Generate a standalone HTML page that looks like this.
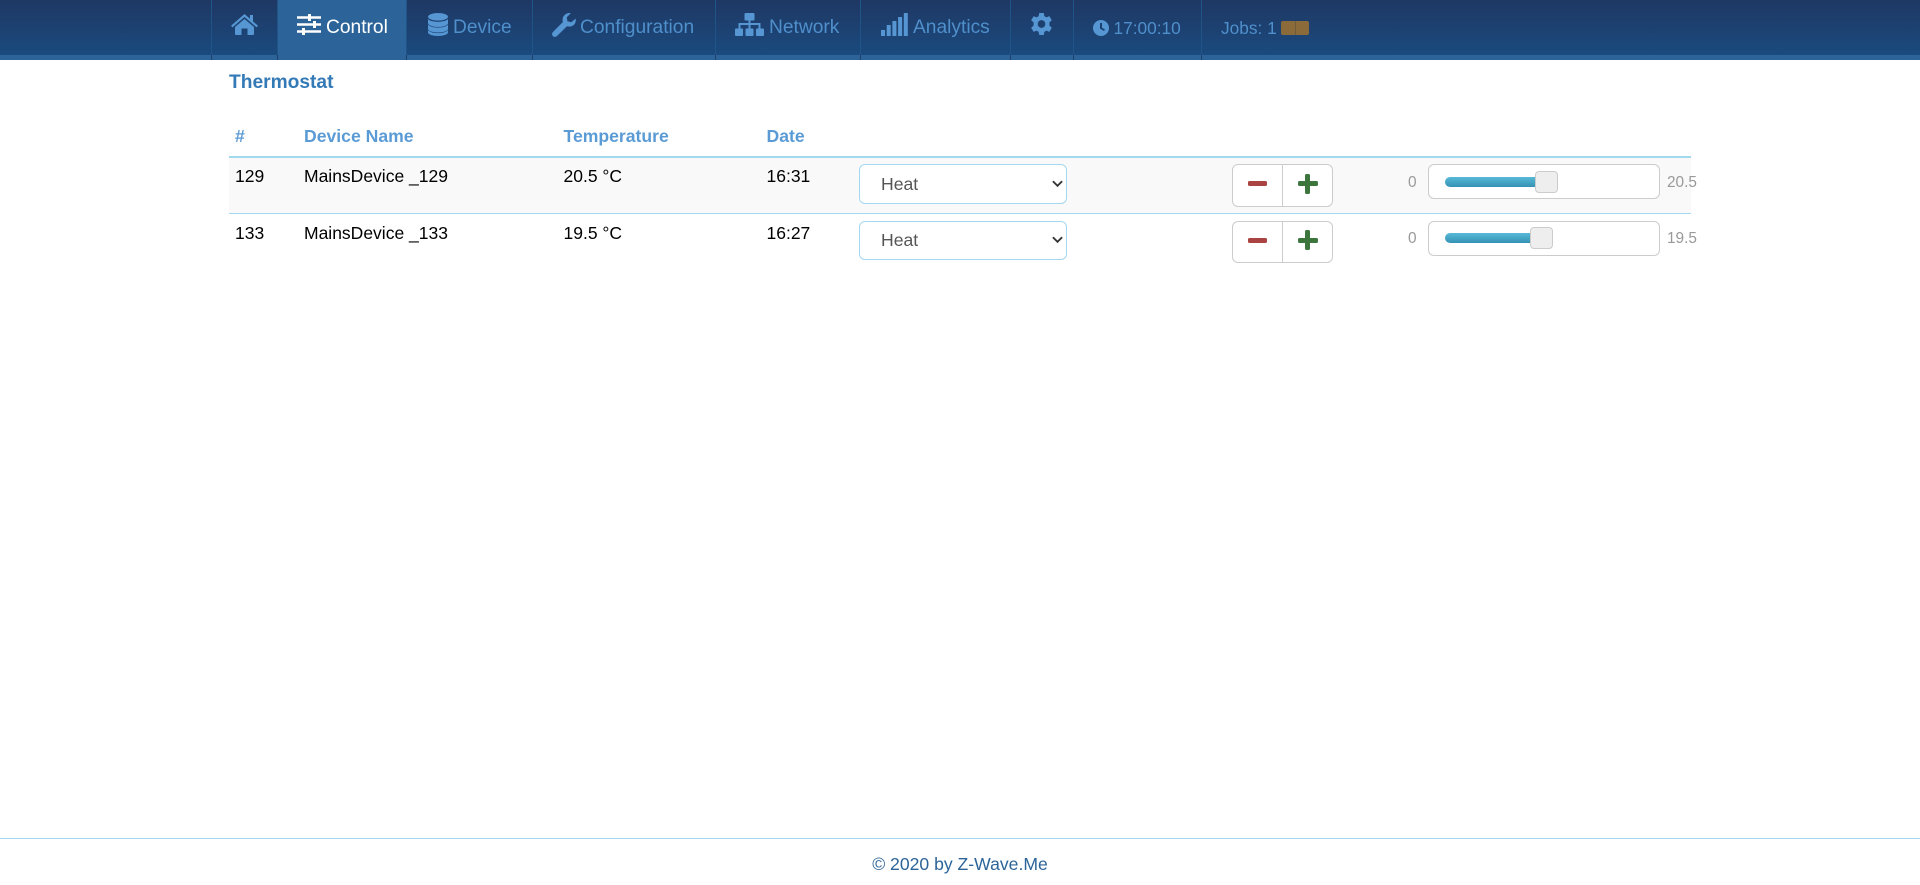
<!DOCTYPE html>
<html><head><meta charset="utf-8"><title>Thermostat</title>
<style>
html,body{margin:0;padding:0;background:#fff;width:1920px;height:885px;overflow:hidden;font-family:"Liberation Sans",sans-serif}
.a{position:absolute}
.t{position:absolute;white-space:nowrap}
#nav{position:absolute;left:0;top:0;width:1920px;height:60px;background:linear-gradient(#1f3864,#1a4a7e 55px);overflow:hidden}
#strip{position:absolute;left:0;top:55px;width:1920px;height:5px;background:#2c6499}
.sep{position:absolute;top:0;width:1px;height:55px;background:#1f5488}
.sep:after{content:"";position:absolute;left:0;top:55px;width:1px;height:5px;background:#1f3f6c}
.n{font-size:19.2px;line-height:24px;top:16px;color:#4f8fcb}
.n2{font-size:17.3px;line-height:22px;top:17px;color:#4f8fcb}
svg{position:absolute;fill:#5596d3}
.h{font-size:17.6px;font-weight:bold;color:#5b9bd5;line-height:20px;top:126px}
.c{font-size:17.5px;color:#000;line-height:20px}
.sel{position:absolute;left:859px;width:208px;box-sizing:border-box;border:1px solid #a3d9ef;border-radius:6px;background:#fff;font-size:17.6px;color:#555;}
.sel span{position:absolute;left:21px;line-height:20px}
.btn{position:absolute;left:1232px;width:101px;box-sizing:border-box;border:1px solid #ccc;border-radius:6px;background:#fff}
.btn i{position:absolute;left:49px;top:0;bottom:0;width:1px;background:#ccc}
.box{position:absolute;left:1428px;width:232px;height:35px;box-sizing:border-box;border:1px solid #ccc;border-radius:6px;background:#fff}
.bar{position:absolute;left:1445px;height:10px;border-radius:5px 0 0 5px;background:linear-gradient(#57b9d8,#3592b4)}
.hd{position:absolute;width:23px;height:22px;box-sizing:border-box;border:1px solid #ccc;border-radius:4px;background:#eee}
.v{font-size:15.4px;color:#999;line-height:20px}
.m{position:absolute;width:19px;height:5px;background:#a94442;border-radius:1.5px}
.p{position:absolute;width:20px;height:5px;background:#3c763d;border-radius:1.5px}
.q{position:absolute;width:5.5px;height:20px;background:#3c763d;border-radius:1.5px}
</style></head><body>
<div id="nav">
<div id="strip"></div>
<div class="a" style="left:277px;top:0;width:130px;height:60px;background:#2c6499"></div>
<div class="sep" style="left:211px"></div><div class="sep" style="left:277px"></div><div class="sep" style="left:406px"></div><div class="sep" style="left:532px"></div><div class="sep" style="left:715px"></div><div class="sep" style="left:860px"></div><div class="sep" style="left:1010px"></div><div class="sep" style="left:1073px"></div><div class="sep" style="left:1201px"></div>

<svg style="left:231px;top:14px" width="27" height="21" viewBox="0 0 27 21"><path d="M13.5 0 L19 4.8 V1 H22 V7.4 L27 11.8 L25.6 13.4 L13.5 3 L1.4 13.4 L0 11.8 Z M13.5 5 L23 13 V20 Q23 21 22 21 H16.5 V14.5 H10.5 V21 H5 Q4 21 4 20 V13 Z"/></svg>

<svg style="left:297px;top:14px;fill:#fff" width="24" height="21" viewBox="0 0 24 21"><path d="M0 2.200H11V0.500Q11 0 11.500 0H13.500Q14 0 14 .5V2.200H24V4.700H14V6.500Q14 7 13.500 7H11.500Q11 7 11 6.500V4.700H0Z M0 9.200H16V7H19V9.200H24V11.700H19V14H16V11.700H0Z M0 16.200H5V14H8V16.200H24V18.700H8V21H5V18.700H0Z"/></svg>
<div class="t n" style="left:326px;color:#fff">Control</div>

<svg style="left:428px;top:13px" width="20" height="23" viewBox="0 0 20 23"><ellipse cx="10" cy="3.800" rx="10" ry="3.800"/><path d="M0 6.100C2 8.100 6 8.700 10 8.700S18 8.100 20 6.100V10.500C20 12.300 15 14 10 14S0 12.300 0 10.500Z M0 11.800C2 13.800 6 14.600 10 14.600S18 13.800 20 11.800V16C20 18 15 19.500 10 19.500S0 18 0 16Z M0 17.200C2 19.200 6 20.100 10 20.100S18 19.200 20 17.200V19.400C20 21.600 15 23 10 23S0 21.600 0 19.400Z"/></svg>
<div class="t n" style="left:453px">Device</div>

<svg style="left:552px;top:13px" width="24" height="24" viewBox="0 0 24 24"><path d="M23.600 5.600C24.400 9 22.600 12.400 19 13.400C17.600 13.800 16.200 13.600 15 13.200L5 23C3.800 24.200 1.900 24.200.9 23.100C-.2 22 -.2 20.200 1 19L10.900 9C10.200 7 10.400 4.800 11.900 2.800C13.600.6 16.400-.4 18.800.2L14.800 4.200L15.400 8.200L19.400 9.200Z"/></svg>
<div class="t n" style="left:580px">Configuration</div>

<svg style="left:735px;top:13px" width="29" height="23" viewBox="0 0 29 23"><path d="M10.500 0H18.500Q19.500 0 19.500 1V6.500Q19.500 7.500 18.500 7.500H15.500V10H25.500V15.500H23.500V12H15.500V15.500H13.500V12H5.500V15.500H3.500V10H13.500V7.500H10.500Q9.500 7.500 9.500 6.500V1Q9.500 0 10.500 0Z M1 15.500H7.500Q8 15.500 8 16.500V22Q8 23 7 23H1Q0 23 0 22V16.500Q0 15.500 1 15.500Z M11.500 15.500H17.500Q18.500 15.500 18.500 16.500V22Q18.500 23 17.500 23H11.500Q10.500 23 10.500 22V16.500Q10.500 15.500 11.500 15.500Z M22 15.500H28Q29 15.500 29 16.500V22Q29 23 28 23H22Q21 23 21 22V16.500Q21 15.500 22 15.500Z"/></svg>
<div class="t n" style="left:769px">Network</div>

<svg style="left:881px;top:13px" width="27" height="23" viewBox="0 0 27 23"><rect x="0" y="17" width="4" height="6"/><rect x="5.700" y="12" width="4" height="11"/><rect x="11.400" y="8" width="4" height="15"/><rect x="17.100" y="4" width="4" height="19"/><rect x="22.800" y="0" width="4" height="23"/></svg>
<div class="t n" style="left:913px">Analytics</div>

<svg style="left:1031px;top:13px" width="21" height="22" viewBox="0 0 22 23"><path fill-rule="evenodd" d="M8.600 0H13.400L14 3.300L16.200 4.500L19.200 3.300L21.800 7.600L19.300 9.800V13.200L21.800 15.400L19.200 19.700L16.200 18.500L14 19.700L13.400 23H8.600L8 19.700L5.800 18.500L2.800 19.700L.2 15.400L2.700 13.200V9.800L.2 7.600L2.800 3.300L5.800 4.500L8 3.300Z M11 7.500A4 4 0 1 0 11 15.500A4 4 0 1 0 11 7.500Z"/></svg>

<svg style="left:1093px;top:20px" width="16" height="16" viewBox="0 0 16 16"><path fill-rule="evenodd" d="M8 0A8 8 0 1 1 8 16A8 8 0 1 1 8 0Z M7 3V8.600L11 11L12 9.500L9 7.700V3Z"/></svg>
<div class="t n2" style="left:1113.5px">17:00:10</div>
<div class="t n2" style="left:1221px">Jobs: 1</div>
<div class="a" style="left:1281px;top:21px;width:14px;height:14px;background:#8b6b3a;border-radius:2px 0 0 2px"></div>
<div class="a" style="left:1295px;top:21px;width:14px;height:14px;background:#8b6b3a;border-radius:0 2px 2px 0;box-shadow:inset 1px 0 0 #6f5a3e"></div>
</div>

<div class="t" style="left:229px;top:71px;font-size:19.2px;font-weight:bold;color:#337ab7;line-height:24px">Thermostat</div>

<div class="t h" style="left:235px">#</div>
<div class="t h" style="left:304px">Device Name</div>
<div class="t h" style="left:563.5px">Temperature</div>
<div class="t h" style="left:766.5px">Date</div>

<div class="a" style="left:229px;top:156px;width:1462px;height:58px;background:#f9f9f9"></div>
<div class="a" style="left:229px;top:156px;width:1462px;height:2px;background:#a3d9ef"></div>
<div class="a" style="left:229px;top:213px;width:1462px;height:1px;background:#a3d9ef"></div>

<div class="t c" style="left:235px;top:166px">129</div>
<div class="t c" style="left:304px;top:166px">MainsDevice _129</div>
<div class="t c" style="left:563.5px;top:166px">20.5 °C</div>
<div class="t c" style="left:766.5px;top:166px">16:31</div>
<div class="t c" style="left:235px;top:223px">133</div>
<div class="t c" style="left:304px;top:223px">MainsDevice _133</div>
<div class="t c" style="left:563.5px;top:223px">19.5 °C</div>
<div class="t c" style="left:766.5px;top:223px">16:27</div>

<div class="sel" style="top:164px;height:40px"><span style="top:9px">Heat</span><svg style="left:192px;top:15px;fill:none;stroke:#333;stroke-width:2" width="11" height="8" viewBox="0 0 12 8"><path d="M1 1L6 6L11 1"/></svg></div>
<div class="sel" style="top:221px;height:39px"><span style="top:8px">Heat</span><svg style="left:192px;top:14px;fill:none;stroke:#333;stroke-width:2" width="11" height="8" viewBox="0 0 12 8"><path d="M1 1L6 6L11 1"/></svg></div>

<div class="btn" style="top:164px;height:43px"><i></i>
<div class="m" style="left:14.5px;top:16px"></div>
<div class="p" style="left:64.5px;top:16px"></div>
<div class="q" style="left:71.75px;top:8.500px"></div></div>
<div class="btn" style="top:221px;height:42px"><i></i>
<div class="m" style="left:14.5px;top:15.500px"></div>
<div class="p" style="left:64.5px;top:15.500px"></div>
<div class="q" style="left:71.75px;top:8px"></div></div>

<div class="t v" style="left:1408px;top:172.500px">0</div>
<div class="box" style="top:164px"></div>
<div class="bar" style="top:177px;width:95px"></div>
<div class="hd" style="left:1535px;top:171px"></div>
<div class="t v" style="left:1667px;top:172.500px">20.5</div>

<div class="t v" style="left:1408px;top:228.500px">0</div>
<div class="box" style="top:221px"></div>
<div class="bar" style="top:233px;width:90px"></div>
<div class="hd" style="left:1530px;top:227px"></div>
<div class="t v" style="left:1667px;top:228.500px">19.5</div>

<div class="a" style="left:0;top:838px;width:1920px;height:1px;background:#a3d9ef"></div>
<div class="t" style="left:0;width:1920px;text-align:center;top:854px;font-size:17.6px;line-height:20px;color:#2c6499">© 2020 by Z-Wave.Me</div>
</body></html>
